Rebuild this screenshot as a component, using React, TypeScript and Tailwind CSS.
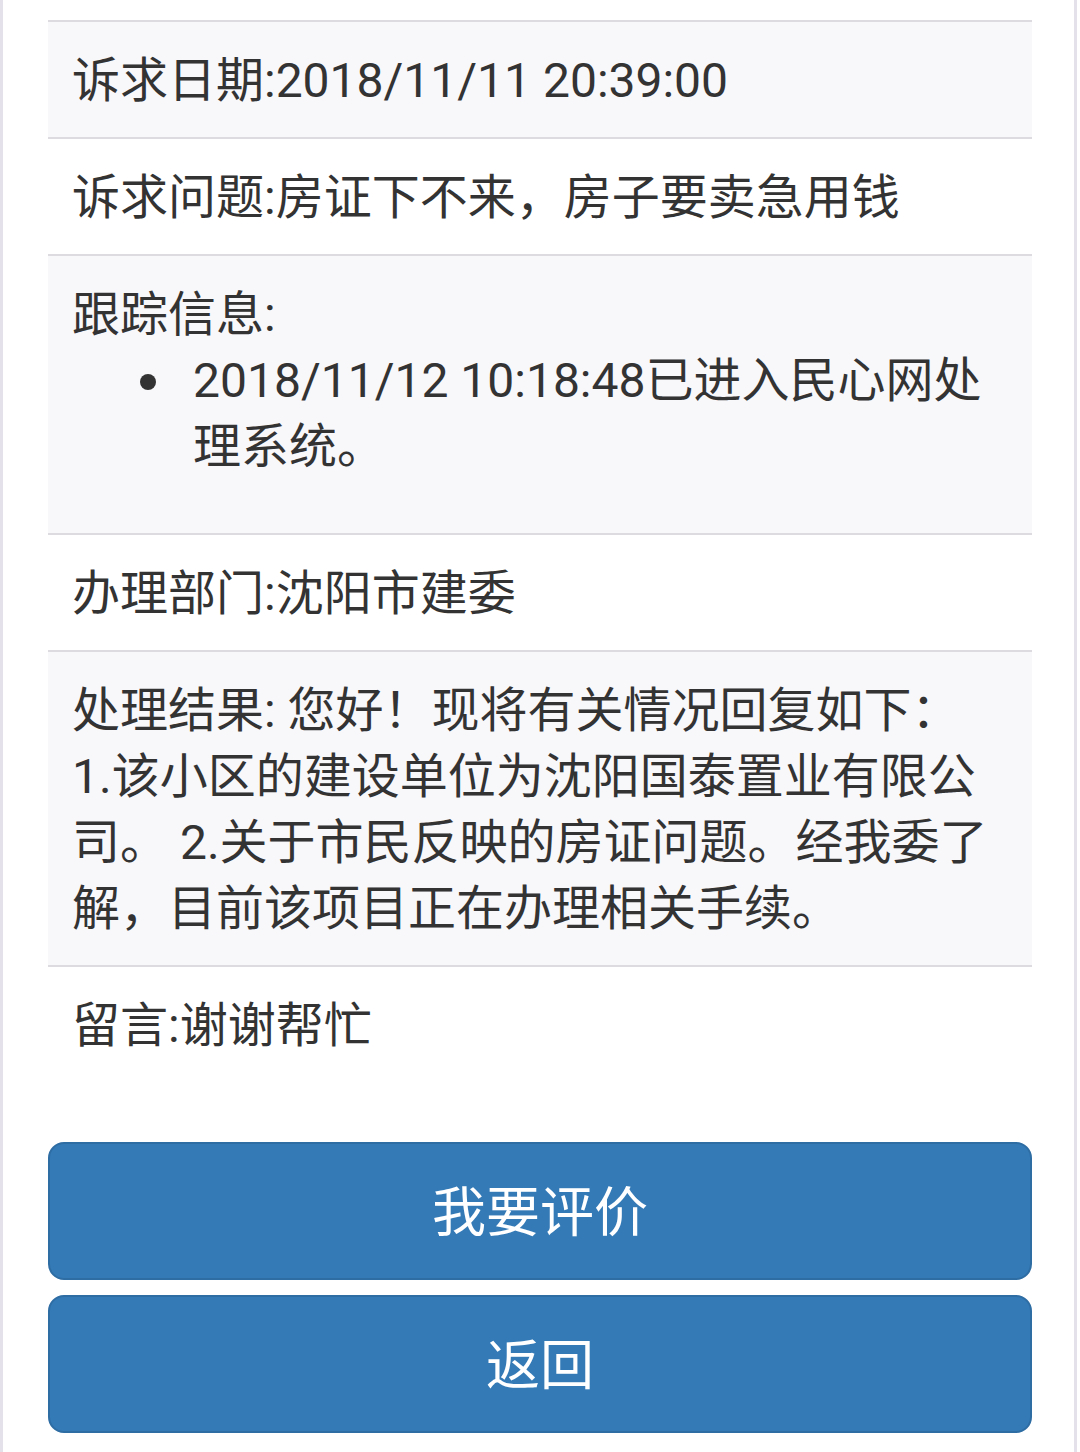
const FONT = "font-['Roboto','Noto_Sans_CJK_SC',sans-serif]";

function Row({ children, shaded, first, last }: { children: React.ReactNode; shaded?: boolean; first?: boolean; last?: boolean }) {
  return (
    <div
      className={
        "px-[24px] pt-[26px] pb-[23px] border-[#dddbe0] " +
        (shaded ? "bg-[#f8f7fa] " : "bg-white ") +
        (first ? "border-t-2 " : "") +
        (last ? "" : "border-b-2")
      }
    >
      {children}
    </div>
  );
}

export default function App() {
  return (
    <div className={`${FONT} w-[1077px] min-h-[1452px] bg-white border-x-[3px] border-[#e4e1ea] text-[#333] text-[48px] leading-[66px]`}>
      <div className="pl-[45px] pr-[42px] pt-[20px] pb-[18px]">
        <Row shaded first>诉求日期:2018/11/11 20:39:00</Row>
        <Row>诉求问题:房证下不来，房子要卖急用钱</Row>
        <Row shaded>
          <div>跟踪信息:</div>
          <ul className="pl-[121px] mb-[30px]">
            <li className="relative">
              <span className="absolute left-[-53px] top-[26px] h-[16px] w-[16px] rounded-full bg-[#333]" />
              2018/11/12 10:18:48已进入民心网处理系统。
            </li>
          </ul>
        </Row>
        <Row>办理部门:沈阳市建委</Row>
        <Row shaded>
          处理结果: 您好！现将有关情况回复如下：
          <br />
          1.该小区的建设单位为沈阳国泰置业有限公司。 2.关于市民反映的房证问题。经我委了解，目前该项目正在办理相关手续。
        </Row>
        <Row last>留言:谢谢帮忙</Row>

        <div className="mt-[60px] flex flex-col gap-[15px]">
          <button type="button" className="h-[138px] w-full rounded-[16px] border-2 border-[#2e6da4] bg-[#337ab7] pt-[6px] text-white text-[54px] flex items-center justify-center">
            我要评价
          </button>
          <button type="button" className="h-[138px] w-full rounded-[16px] border-2 border-[#2e6da4] bg-[#337ab7] pt-[6px] text-white text-[54px] flex items-center justify-center">
            返回
          </button>
        </div>
      </div>
    </div>
  );
}
